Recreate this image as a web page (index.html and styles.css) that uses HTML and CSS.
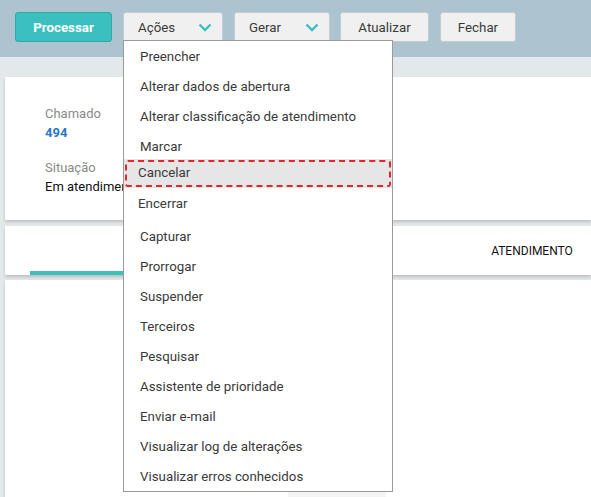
FILE: index.html
```html
<!DOCTYPE html>
<html lang="pt-BR">
<head>
    <meta charset="UTF-8">
    <title>Chamado 494</title>
    <link rel="stylesheet" href="styles.css">
</head>
<body>
    <div class="toolbar">
        <button class="btn btn-primary">Processar</button>
        <div class="dropdown">
            <button class="btn btn-drop">Ações
                <svg class="chevron" width="14" height="9" viewBox="0 0 14 9"><path d="M1.5 1.5 L7 7 L12.5 1.5" fill="none" stroke="#3bbfc0" stroke-width="2.4"/></svg>
            </button>
            <ul class="menu">
                <li>Preencher</li>
                <li>Alterar dados de abertura</li>
                <li>Alterar classificação de atendimento</li>
                <li>Marcar</li>
                <li class="marked">Cancelar</li>
                <li class="after-marked">Encerrar</li>
                <li>Capturar</li>
                <li>Prorrogar</li>
                <li>Suspender</li>
                <li>Terceiros</li>
                <li>Pesquisar</li>
                <li>Assistente de prioridade</li>
                <li>Enviar e-mail</li>
                <li>Visualizar log de alterações</li>
                <li>Visualizar erros conhecidos</li>
            </ul>
        </div>
        <button class="btn btn-drop btn-gerar">Gerar
            <svg class="chevron" width="14" height="9" viewBox="0 0 14 9"><path d="M1.5 1.5 L7 7 L12.5 1.5" fill="none" stroke="#3bbfc0" stroke-width="2.4"/></svg>
        </button>
        <button class="btn btn-atualizar">Atualizar</button>
        <button class="btn btn-fechar">Fechar</button>
    </div>

    <div class="main">
        <div class="card card-info">
            <div class="label">Chamado</div>
            <div class="numero">494</div>
            <div class="label label-gap">Situação</div>
            <div class="valor">Em atendimento</div>
        </div>

        <div class="card card-tabs">
            <div class="tab tab-active"></div>
            <div class="tab">ATENDIMENTO</div>
        </div>

        <div class="card card-body">
            <div class="faint-box"></div>
        </div>
    </div>
</body>
</html>
```

FILE: styles.css
```css
body {
    margin: 0;
    font-family: Roboto, "Liberation Sans", sans-serif;
    font-size: 13px;
    color: #3a3a3a;
    background-color: #e3e8eb;
    overflow: hidden;
}

.toolbar {
    display: flex;
    align-items: flex-start;
    height: 45px;
    padding: 12px 0 0 15px;
    background-color: #adc4d0;
}

.btn {
    box-sizing: border-box;
    height: 30px;
    margin-right: 11px;
    padding: 0;
    border: 1px solid #c4cdd2;
    border-radius: 3px;
    background-color: #f0f0f0;
    font-family: Roboto, "Liberation Sans", sans-serif;
    font-size: 13.3px;
    color: #3a3a3a;
    text-align: center;
}

.btn-primary {
    width: 97px;
    margin-right: 11px;
    background-color: #3cbfbf;
    border-color: #2fa9a9;
    color: #fff;
    font-weight: bold;
}

.btn-drop {
    display: flex;
    align-items: center;
    justify-content: space-between;
    width: 100px;
    padding: 0 10px 0 14px;
}

.btn-gerar {
    width: 96px;
    margin-right: 10px;
}

.chevron {
    margin-top: 1px;
}

.btn-atualizar {
    width: 89px;
}

.btn-fechar {
    width: 76px;
}

/* menu de ações */
.dropdown {
    position: relative;
}

.menu {
    position: absolute;
    top: 28px;
    left: 0;
    z-index: 10;
    width: 268px;
    margin: 0;
    padding: 0;
    list-style: none;
    background-color: #fff;
    border: 1px solid #9a9a9a;
    font-size: 13.3px;
}

.menu li {
    height: 30px;
    line-height: 31px;
    padding-left: 16px;
    white-space: nowrap;
}

.menu li.marked {
    position: relative;
    height: 29px;
    line-height: 28px;
    margin-top: -2px;
    padding-left: 14px;
    background-color: #e6e6e6;
}

.menu li.marked::after {
    content: "";
    position: absolute;
    top: 1px;
    left: 1px;
    right: 1px;
    bottom: 1px;
    border: 2px dashed #e2262e;
    border-radius: 3px;
}

.menu li.after-marked {
    height: 33px;
    line-height: 32px;
    padding-left: 14px;
}

/* conteúdo */
.main {
    padding: 20px 0 0 5px;
}

.card {
    background-color: #fff;
    box-shadow: 0 2px 3px rgba(0, 0, 0, 0.18);
}

.card-info {
    height: 116px;
    padding: 27px 0 0 40px;
    margin-bottom: 6px;
    line-height: 19px;
}

.label {
    color: #8a8a8a;
}

.label-gap {
    margin-top: 16px;
}

.numero {
    color: #2a78c0;
    font-weight: bold;
}

.valor {
    color: #111;
}

.card-tabs {
    display: flex;
    height: 49px;
    margin-bottom: 5px;
}

.tab {
    display: flex;
    flex: none;
    align-items: center;
    justify-content: center;
    width: 170px;
    margin-left: 57px;
    font-size: 12px;
    color: #111;
}

.tab-active {
    width: 360px;
    margin-left: 25px;
    border-bottom: 4px solid #3bbfbf;
}

.card-body {
    height: 5px;
    padding-top: 212px;
}

.faint-box {
    width: 98px;
    height: 10px;
    margin-left: 283px;
    background-color: #f4f4f4;
}
```
